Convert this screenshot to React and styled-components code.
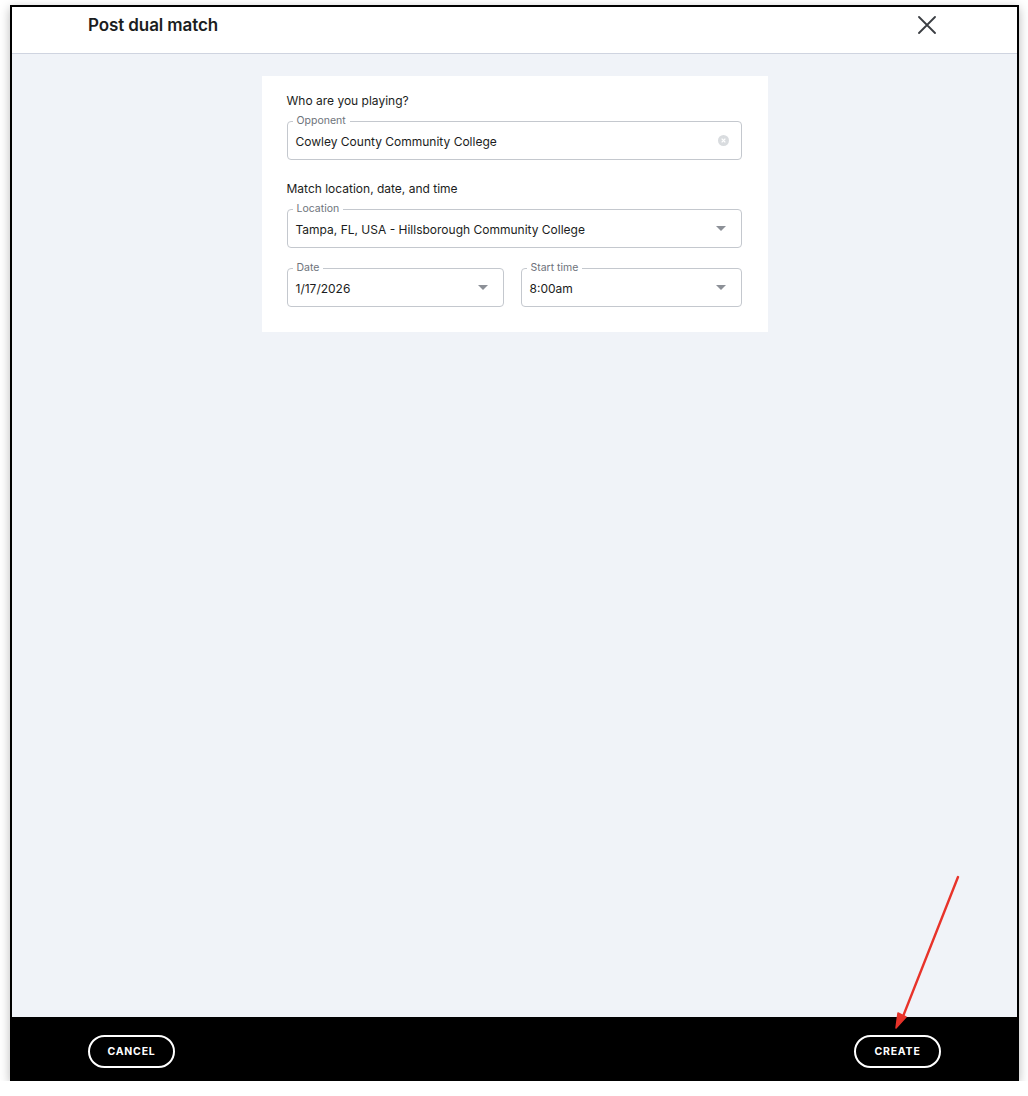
import React from "react"
import styled, { createGlobalStyle } from "styled-components"

const GlobalStyle = createGlobalStyle`
  html, body {
    margin: 0;
    padding: 0;
    background: #fff;
  }
  body {
    font-family: Inter, "Noto Sans", sans-serif;
    color: #1b1d21;
  }
  *, *::before, *::after {
    box-sizing: border-box;
  }
`

const Window = styled.div`
  position: relative;
  width: 1009px;
  height: 1076px;
  margin: 5px 0 0 10px;
  border: 2px solid #000;
  display: flex;
  flex-direction: column;
  box-shadow: 0 3px 10px rgba(0, 0, 0, 0.28);
`

const Header = styled.header`
  height: 47px;
  flex: none;
  display: flex;
  align-items: center;
  justify-content: space-between;
  padding: 0 80px 10px 76px;
  background: #fff;
  border-bottom: 1px solid #cfd4e0;

  h1 {
    margin: 0;
    font-size: 17px;
    font-weight: 600;
    letter-spacing: -0.1px;
  }
`

const CloseButton = styled.button`
  border: 0;
  background: none;
  padding: 0;
  width: 20px;
  height: 20px;
  display: flex;
  align-items: center;
  justify-content: center;
  cursor: pointer;
`

const Body = styled.main`
  flex: 1;
  background: #f0f3f8;
  padding-top: 22px;
  display: flex;
  flex-direction: column;
  align-items: center;
`

const Card = styled.section`
  width: 506px;
  background: #fff;
  padding: 17px 26px 25px 25px;
  display: flex;
  flex-direction: column;
`

const SectionTitle = styled.h2`
  margin: ${(p) => (p.$spaced ? "21px" : "0")} 0 12px;
  font-size: 12px;
  font-weight: 400;
  line-height: 16px;
  color: #1b1d21;
`

const Row = styled.div`
  display: grid;
  grid-template-columns: 217px 221px;
  column-gap: 17px;
  margin-top: 20px;
`

const Field = styled.div`
  position: relative;
  height: 39px;
  border: 1px solid #c4c8ce;
  border-radius: 4px;
  display: flex;
  align-items: center;
  padding: 0 12px 0 8px;
  font-size: 12px;
  color: #1b1d21;
`

const Legend = styled.span`
  position: absolute;
  top: -7px;
  left: 5px;
  padding: 0 4px;
  background: #fff;
  font-size: 10.5px;
  line-height: 12px;
  color: #6e737b;
`

const Value = styled.span`
  flex: 1;
  padding-top: 1px;
`

const Caret = styled.span`
  width: 0;
  height: 0;
  border-left: 5px solid transparent;
  border-right: 5px solid transparent;
  border-top: 5px solid #8c9097;
  margin-right: 3px;
`

const Footer = styled.footer`
  height: 62px;
  flex: none;
  background: #000;
  display: flex;
  justify-content: space-between;
  align-items: flex-start;
  padding: 18px 76px 0;
`

const PillButton = styled.button`
  width: 87px;
  height: 33px;
  border: 2px solid #fff;
  border-radius: 17px;
  background: #000;
  color: #fff;
  font-family: Inter, "Noto Sans", sans-serif;
  font-size: 10.5px;
  font-weight: 700;
  letter-spacing: 0.8px;
  cursor: pointer;
`

const Annotation = styled.svg`
  position: absolute;
  left: 0;
  top: 0;
  pointer-events: none;
`

const SelectField = ({ label, value }) => (
  <Field>
    <Legend>{label}</Legend>
    <Value>{value}</Value>
    <Caret />
  </Field>
)

const App = () => {
  return (
    <>
      <GlobalStyle />
      <Window>
        <Header>
          <h1>Post dual match</h1>
          <CloseButton aria-label="Close">
            <svg width="18" height="18" viewBox="0 0 18 18">
              <path d="M1 1 L17 17 M17 1 L1 17" stroke="#3a3d42" strokeWidth="1.8" strokeLinecap="round" />
            </svg>
          </CloseButton>
        </Header>
        <Body>
          <Card>
            <SectionTitle>Who are you playing?</SectionTitle>
            <Field>
              <Legend>Opponent</Legend>
              <Value>Cowley County Community College</Value>
              <svg width="11" height="11" viewBox="0 0 12 12">
                <circle cx="6" cy="6" r="6" fill="#d9dcdf" />
                <path d="M4 4 L8 8 M8 4 L4 8" stroke="#fff" strokeWidth="1.4" />
              </svg>
            </Field>
            <SectionTitle $spaced>Match location, date, and time</SectionTitle>
            <SelectField label="Location" value="Tampa, FL, USA - Hillsborough Community College" />
            <Row>
              <SelectField label="Date" value="1/17/2026" />
              <SelectField label="Start time" value="8:00am" />
            </Row>
          </Card>
        </Body>
        <Footer>
          <PillButton>CANCEL</PillButton>
          <PillButton>CREATE</PillButton>
        </Footer>
        <Annotation width="1005" height="1072" viewBox="0 0 1005 1072">
          <path d="M946 870 L890 1012" stroke="#e8332a" strokeWidth="2.4" strokeLinecap="round" />
          <path d="M884 1021 L886 1006 L894 1010 Z" fill="#e8332a" stroke="#e8332a" strokeWidth="1.5" strokeLinejoin="round" />
        </Annotation>
      </Window>
    </>
  )
}

export default App
